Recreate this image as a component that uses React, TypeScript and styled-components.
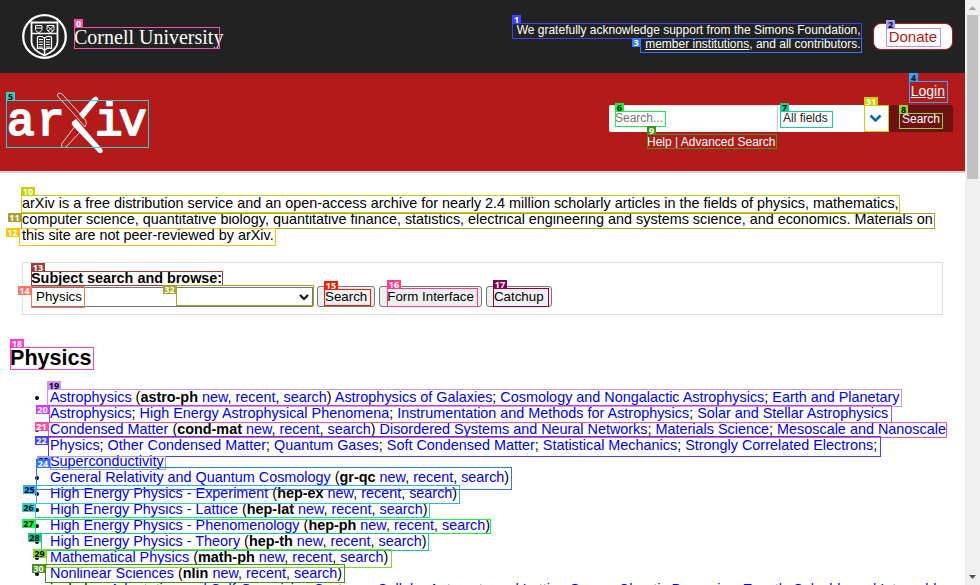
import React from "react";
import styled, { createGlobalStyle } from "styled-components";

const GlobalStyle = createGlobalStyle`
  * { box-sizing: border-box; }
  body {
    margin: 0;
    background: #fff;
    color: #000;
    font-family: "Liberation Sans", Arial, sans-serif;
    font-size: 90%;
    line-height: 16px;
  }
`;

const Shell = styled.div`
  position: relative;
  display: flex;
  height: 100vh;
  overflow: hidden;
`;

const Page = styled.div`
  flex: 1;
  min-width: 0;
  overflow: hidden;
`;

const ScrollTrack = styled.div`
  display: flex;
  flex-direction: column;
  align-items: center;
  width: 15px;
  background: #f0f0f0;
`;

const ScrollThumb = styled.div`
  width: 11px;
  height: 28%;
  background: #c1c1c1;
`;

const ScrollArrow = styled.svg`
  display: block;
  width: 15px;
  height: 15px;
  flex: none;
  &:last-child { margin-top: auto; }
`;

const Banner = styled.header`
  display: flex;
  align-items: center;
  gap: 12px;
  height: 73px;
  padding: 0 12px 0 22px;
  background: #222;
  color: #fff;
`;

const University = styled.a`
  display: flex;
  align-items: center;
  gap: 7px;
  margin-right: auto;
  color: #fff;
  font-family: "Liberation Serif", serif;
  font-size: 20px;
  line-height: 24px;
  text-decoration: none;
  white-space: nowrap;
`;

const Support = styled.p`
  margin: 0;
  font-size: 12px;
  line-height: 14px;
  text-align: right;
  a { color: #fff; }
`;

const Donate = styled.a`
  padding: 4px 15px;
  border: 1px solid #b31b1b;
  border-radius: 8px;
  background: #fff;
  color: #b31b1b;
  font-size: 15px;
  line-height: 17px;
  text-decoration: none;
`;

const Masthead = styled.div`
  display: flex;
  justify-content: space-between;
  height: 100px;
  padding: 10px 12px 0 6px;
  border-bottom: 2px solid #d8cfcf;
  background: #b31b1b;
  color: #fff;
`;

const Logo = styled.svg`
  display: block;
  width: 143px;
  height: 72px;
  margin-top: 8px;
`;

const LogoText = styled.text`
  fill: #fff;
  stroke: #fff;
  stroke-width: 2px;
  stroke-linejoin: round;
  font-family: "Liberation Mono", monospace;
  font-size: 46px;
`;

const SearchArea = styled.div`
  display: flex;
  flex-direction: column;
  width: 344px;
`;

const Login = styled.a`
  align-self: flex-end;
  margin-right: 8px;
  color: #fff;
  font-size: 14px;
`;

const SearchForm = styled.form`
  display: flex;
  height: 27px;
  margin-top: 6px;
`;

const Query = styled.input`
  flex: 1;
  min-width: 0;
  padding: 0 6px 2px;
  border: 0;
  border-radius: 2px 0 0 2px;
  background: #fff;
  font: 12px "Liberation Sans", sans-serif;
  box-shadow: inset 0 1px 2px #ddd;
  &::placeholder { color: #757575; }
`;

const FieldPicker = styled.div`
  display: grid;
  align-items: center;
  width: 112px;
  border-left: 1px solid #ccc;
  background: #fff;
  svg {
    grid-area: 1 / 1;
    justify-self: end;
    margin-right: 7px;
    pointer-events: none;
  }
`;

const FieldSelect = styled.select`
  grid-area: 1 / 1;
  width: 100%;
  height: 27px;
  padding: 0 5px 2px;
  border: 0;
  appearance: none;
  background: transparent;
  color: #222;
  font: 12px "Liberation Sans", sans-serif;
`;

const SearchButton = styled.button`
  width: 64px;
  padding: 0;
  border: 0;
  border-radius: 0 2px 2px 0;
  background: #701111;
  color: #fff;
  font: 12px "Liberation Sans", sans-serif;
`;

const HelpLinks = styled.p`
  margin: 3px 0 0 38px;
  font-size: 12px;
  line-height: 14px;
  a { color: #fff; text-decoration: none; }
`;

const Main = styled.main`
  padding: 22px 10px 0;
`;

const Intro = styled.p`
  margin: 0 12px;
`;

const BrowseBox = styled.form`
  margin: 19px 12px 0;
  padding: 7px 8px;
  border: 1px solid #ddd;
`;

const BrowseLabel = styled.label`
  display: block;
  font-weight: bold;
`;

const BrowseRow = styled.div`
  display: flex;
  align-items: center;
  gap: 4px;
`;

const ArchiveSelect = styled.select`
  width: 282px;
  height: 20px;
  border: 1px solid #767676;
  border-radius: 0;
  background: #fff;
  color: #000;
  font-family: "Liberation Sans", sans-serif;
`;

const BrowseButton = styled.button`
  height: 21px;
  padding: 0 7px;
  border: 1px solid #767676;
  border-radius: 3px;
  background: #efefef;
  color: #000;
  font-family: "Liberation Sans", sans-serif;
`;

const Heading = styled.h2`
  margin: 30px 0 19px;
  font-size: 150%;
  line-height: 25px;
`;

const ArchiveList = styled.ul`
  margin: 0;
  padding: 0 0 0 40px;
  a { color: #0000ee; text-decoration: none; }
`;

const Overlay = styled.div`
  position: absolute;
  inset: 0;
  overflow: hidden;
  pointer-events: none;
`;

const Mark = styled.div<{ $color: string }>`
  position: absolute;
  border: 1px solid ${(p) => p.$color};
`;

const Tag = styled.span<{ $color: string; $dark: boolean; $side: boolean; $wide: boolean }>`
  position: absolute;
  top: ${(p) => (p.$side ? -1 : -9)}px;
  ${(p) => (p.$side ? "right: calc(100% + 1px);" : "left: -1px;")}
  width: ${(p) => (p.$wide ? (p.$side ? 13 : 14) : p.$side ? 8 : 9)}px;
  height: ${(p) => (p.$side ? 9 : 8)}px;
  background: ${(p) => p.$color};
  color: ${(p) => (p.$dark ? "#000" : "#fff")};
  font: bold 9px/9px "Open Sans", sans-serif;
  text-align: center;
`;

// left, top, right, bottom, colour, dark digits, tag beside the box
type MarkData = [number, number, number, number, string, boolean?, boolean?];

const marks: MarkData[] = [
  [74, 27, 220, 49, "#ff4fa3"],
  [512, 23, 862, 39, "#4040ff"],
  [886, 28, 941, 47, "#a29bfe", true],
  [640, 38, 862, 53, "#3377ff", false, true],
  [909, 81, 948, 103, "#2fa9ff", true],
  [6, 100, 149, 148, "#2bd0cf", true],
  [615, 111, 666, 127, "#15f04a", true],
  [780, 111, 833, 128, "#15ce91", true],
  [899, 113, 943, 129, "#84d930", true],
  [647, 134, 777, 149, "#44911b"],
  [21, 195, 900, 213, "#c6d300"],
  [21, 213, 935, 229, "#aaa02c", false, true],
  [19, 228, 276, 246, "#ffc400", false, true],
  [31, 271, 223, 286, "#99423a"],
  [31, 286, 85, 308, "#ff7363", false, true],
  [324, 289, 371, 306, "#f71c00"],
  [387, 288, 478, 307, "#ff3d8b"],
  [493, 288, 549, 307, "#870050"],
  [10, 347, 94, 370, "#ff3fc8"],
  [47, 389, 902, 407, "#c893ff", true],
  [49, 405, 892, 423, "#c63ffa", false, true],
  [48, 422, 947, 438, "#ff4fa5", false, true],
  [48, 436, 881, 457, "#4040ff", false, true],
  [50, 456, 166, 470, "#a29bfe", true, true],
  [36, 467, 512, 490, "#2f74ff"],
  [36, 485, 460, 504, "#33aaff", true, true],
  [35, 503, 430, 518, "#2bcfd0", true, true],
  [35, 519, 491, 534, "#19f24d", true, true],
  [41, 533, 429, 551, "#15c792", true, true],
  [46, 549, 392, 568, "#84d930", true, true],
  [45, 564, 345, 583, "#44911b", false, true],
  [864, 105, 889, 132, "#c6d300"],
  [176, 285, 314, 306, "#aaa02c", false, true],
];

type Archive = { name: string; code: string; topics?: string[]; intro?: string };

const archives: Archive[] = [
  {
    name: "Astrophysics",
    code: "astro-ph",
    topics: [
      "Astrophysics of Galaxies",
      "Cosmology and Nongalactic Astrophysics",
      "Earth and Planetary Astrophysics",
      "High Energy Astrophysical Phenomena",
      "Instrumentation and Methods for Astrophysics",
      "Solar and Stellar Astrophysics",
    ],
  },
  {
    name: "Condensed Matter",
    code: "cond-mat",
    topics: [
      "Disordered Systems and Neural Networks",
      "Materials Science",
      "Mesoscale and Nanoscale Physics",
      "Other Condensed Matter",
      "Quantum Gases",
      "Soft Condensed Matter",
      "Statistical Mechanics",
      "Strongly Correlated Electrons",
      "Superconductivity",
    ],
  },
  { name: "General Relativity and Quantum Cosmology", code: "gr-qc" },
  { name: "High Energy Physics - Experiment", code: "hep-ex" },
  { name: "High Energy Physics - Lattice", code: "hep-lat" },
  { name: "High Energy Physics - Phenomenology", code: "hep-ph" },
  { name: "High Energy Physics - Theory", code: "hep-th" },
  { name: "Mathematical Physics", code: "math-ph" },
  {
    name: "Nonlinear Sciences",
    code: "nlin",
    intro: "includes: ",
    topics: [
      "Adaptation and Self-Organizing Systems",
      "Cellular Automata and Lattice Gases",
      "Chaotic Dynamics",
      "Exactly Solvable and Integrable Systems",
      "Pattern Formation and Solitons",
    ],
  },
];

function Seal() {
  return (
    <svg width="45" height="45" viewBox="0 0 45 45" fill="none" stroke="#fff" aria-hidden="true">
      <circle cx="22.5" cy="22.5" r="21.3" strokeWidth="2.3" />
      <path d="M9.5 8.5H35.5V28C35.5 34 28 39 22.5 41.5C17 39 9.5 34 9.5 28Z" strokeWidth="1.8" />
      <path d="M10 19.5H35M22.5 35V41" strokeWidth="1.5" />
      <path d="M13.5 11.5H20V15.5Q19 18 16.7 18.5Q14 18 13.5 15.5ZM25 11.5H32V15.5Q31 18 28.5 18.5Q26 18 25 15.5Z" />
      <path d="M14 14H20M25.5 12L28.5 15L31.5 12M26 17L28.5 15L31 17" />
      <path d="M15.5 23Q19 21.5 22.5 24Q26 21.5 29.5 23V34.5Q26 33.5 22.5 36Q19 33.5 15.5 34.5Z" strokeWidth="1.3" />
      <path d="M22.5 23V36M17 25.5H21M17 28H21M17 30.5H21M17 33H21M24 25.5H28M24 28H28M24 30.5H28M24 33H28" strokeWidth="1.2" />
    </svg>
  );
}

function ArxivLogo() {
  return (
    <Logo viewBox="0 0 143 72" role="img" aria-label="arXiv" fill="#fff">
      <LogoText x="1 31" y="44">ar</LogoText>
      <LogoText x="89 113" y="44">iv</LogoText>
      <path
        d="M55 2.5Q51 1 51.5 5L71 26.5L79 36Q81.5 32 79.5 29L57 4Q56 2.5 55 2.5Z"
        fill="#b31b1b" stroke="#f4d5d5" strokeWidth="1"
      />
      <path
        d="M70 34L55.5 53Q55 58 60 56L76 39Z"
        fill="#b31b1b" stroke="#f4d5d5" strokeWidth="1"
      />
      <path d="M73 23L87 7Q90 4 92 7Q93 9 91 11L77 28Z" />
      <path d="M66 31L70 28L96 58Q98 61 95 62Q93 63 91 60L67 35Q65 33 66 31Z" />
    </Logo>
  );
}

export default function App() {
  return (
    <Shell>
      <GlobalStyle />
      <Page>
        <Banner>
          <University href="#cornell">
            <Seal />
            Cornell University
          </University>
          <Support>
            We gratefully acknowledge support from the Simons Foundation,
            <br />
            <a href="#members">member institutions</a>, and all contributors.
          </Support>
          <Donate href="#donate">Donate</Donate>
        </Banner>
        <Masthead>
          <ArxivLogo />
          <SearchArea>
            <Login href="#login">Login</Login>
            <SearchForm>
              <Query type="text" placeholder="Search..." aria-label="Search term or terms" />
              <FieldPicker>
                <FieldSelect aria-label="Field to search">
                  <option>All fields</option>
                </FieldSelect>
                <svg width="13" height="9" viewBox="0 0 13 9" fill="none" stroke="#0068ac" strokeWidth="2.6" aria-hidden="true">
                  <path d="M1.5 1.5L6.5 6.5L11.5 1.5" />
                </svg>
              </FieldPicker>
              <SearchButton type="button">Search</SearchButton>
            </SearchForm>
            <HelpLinks>
              <a href="#help">Help</a> | <a href="#advanced">Advanced Search</a>
            </HelpLinks>
          </SearchArea>
        </Masthead>
        <Main>
          <Intro>
            arXiv is a free distribution service and an open-access archive for nearly 2.4 million
            scholarly articles in the fields of physics, mathematics, computer science, quantitative
            biology, quantitative finance, statistics, electrical engineering and systems science,
            and economics. Materials on this site are not peer-reviewed by arXiv.
          </Intro>
          <BrowseBox>
            <BrowseLabel htmlFor="archive">Subject search and browse:</BrowseLabel>
            <BrowseRow>
              <ArchiveSelect id="archive">
                <option>Physics</option>
              </ArchiveSelect>
              <BrowseButton type="button">Search</BrowseButton>
              <BrowseButton type="button">Form Interface</BrowseButton>
              <BrowseButton type="button">Catchup</BrowseButton>
            </BrowseRow>
          </BrowseBox>
          <Heading>Physics</Heading>
          <ArchiveList>
            {archives.map((item) => (
              <li key={item.code}>
                <a href={`#${item.code}`}>{item.name}</a> (<b>{item.code}</b>{" "}
                <a href="#new">new</a>, <a href="#recent">recent</a>, <a href="#search">search</a>)
                {item.intro ? <br /> : " "}
                {item.intro}
                {item.topics?.map((topic, i) => (
                  <React.Fragment key={topic}>
                    {i > 0 && "; "}
                    <a href={`#${item.code}-${i}`}>{topic}</a>
                  </React.Fragment>
                ))}
              </li>
            ))}
          </ArchiveList>
        </Main>
      </Page>
      <ScrollTrack aria-hidden="true">
        <ScrollArrow viewBox="0 0 15 15" fill="#a3a3a3"><path d="M4 10H11L7.5 6Z" /></ScrollArrow>
        <ScrollThumb />
        <ScrollArrow viewBox="0 0 15 15" fill="#505050"><path d="M4 5H11L7.5 9Z" /></ScrollArrow>
      </ScrollTrack>
      <Overlay>
        {marks.map(([left, top, right, bottom, color, dark, side], i) => (
          <Mark key={i} $color={color} style={{ left, top, width: right - left, height: bottom - top }}>
            <Tag $color={color} $dark={!!dark} $side={!!side} $wide={i > 9}>{i}</Tag>
          </Mark>
        ))}
      </Overlay>
    </Shell>
  );
}
